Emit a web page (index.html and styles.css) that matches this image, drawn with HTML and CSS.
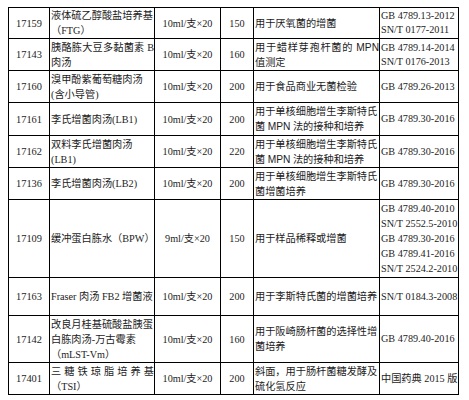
FILE: index.html
```html
<!DOCTYPE html>
<html lang="zh-CN">
<head>
<meta charset="utf-8">
<title>培养基规格表</title>
<link rel="stylesheet" href="styles.css">
</head>
<body>
<table class="spec">
  <colgroup>
    <col class="c-code"><col class="c-name"><col class="c-pack"><col class="c-qty"><col class="c-use"><col class="c-std">
  </colgroup>
  <tbody>
    <tr class="h31">
      <td class="code">17159</td>
      <td class="name">液体硫乙醇酸盐培养基<br>（FTG）</td>
      <td class="pack">10ml/支×20</td>
      <td class="qty">150</td>
      <td class="use">用于厌氧菌的增菌</td>
      <td class="std">GB 4789.13-2012<br>SN/T 0177-2011</td>
    </tr>
    <tr class="h32">
      <td class="code">17143</td>
      <td class="name"><span class="jl">胰酪胨大豆多黏菌素 B</span>肉汤</td>
      <td class="pack">10ml/支×20</td>
      <td class="qty">160</td>
      <td class="use"><span class="jl">用于蜡样芽孢杆菌的 <span class="sans">MPN</span></span>值测定</td>
      <td class="std">GB 4789.14-2014<br>SN/T 0176-2013</td>
    </tr>
    <tr class="h32">
      <td class="code">17160</td>
      <td class="name">溴甲酚紫葡萄糖肉汤<br>(含小导管)</td>
      <td class="pack">10ml/支×20</td>
      <td class="qty">200</td>
      <td class="use">用于食品商业无菌检验</td>
      <td class="std">GB 4789.26-2013</td>
    </tr>
    <tr class="h33">
      <td class="code">17161</td>
      <td class="name">李氏增菌肉汤(LB1)</td>
      <td class="pack">10ml/支×20</td>
      <td class="qty">200</td>
      <td class="use">用于单核细胞增生李斯特氏<br>菌 <span class="sans">MPN</span> 法的接种和培养</td>
      <td class="std">GB 4789.30-2016</td>
    </tr>
    <tr class="h32">
      <td class="code">17162</td>
      <td class="name">双料李氏增菌肉汤<br>(LB1)</td>
      <td class="pack">10ml/支×20</td>
      <td class="qty">220</td>
      <td class="use">用于单核细胞增生李斯特氏<br>菌 <span class="sans">MPN</span> 法的接种和培养</td>
      <td class="std">GB 4789.30-2016</td>
    </tr>
    <tr class="h32">
      <td class="code">17136</td>
      <td class="name">李氏增菌肉汤(LB2)</td>
      <td class="pack">10ml/支×20</td>
      <td class="qty">200</td>
      <td class="use">用于单核细胞增生李斯特氏<br>菌增菌培养</td>
      <td class="std">GB 4789.30-2016</td>
    </tr>
    <tr class="h78">
      <td class="code">17109</td>
      <td class="name">缓冲蛋白胨水（BPW）</td>
      <td class="pack">9ml/支×20</td>
      <td class="qty">150</td>
      <td class="use">用于样品稀释或增菌</td>
      <td class="std tall">GB 4789.40-2010<br>SN/T 2552.5-2010<br>GB 4789.30-2016<br>GB 4789.41-2016<br>SN/T 2524.2-2010</td>
    </tr>
    <tr class="h38">
      <td class="code">17163</td>
      <td class="name">Fraser 肉汤 FB2 增菌液</td>
      <td class="pack">10ml/支×20</td>
      <td class="qty">200</td>
      <td class="use">用于李斯特氏菌的增菌培养</td>
      <td class="std">SN/T 0184.3-2008</td>
    </tr>
    <tr class="h47">
      <td class="code">17142</td>
      <td class="name">改良月桂基硫酸盐胰蛋<br>白胨肉汤-万古霉素<br>（mLST-Vm）</td>
      <td class="pack">10ml/支×20</td>
      <td class="qty">160</td>
      <td class="use">用于阪崎肠杆菌的选择性增<br>菌培养</td>
      <td class="std">GB 4789.40-2016</td>
    </tr>
    <tr class="h32">
      <td class="code">17401</td>
      <td class="name"><span class="jl">三糖铁琼脂培养基</span>（TSI）</td>
      <td class="pack">10ml/支×20</td>
      <td class="qty">200</td>
      <td class="use">斜面，用于肠杆菌糖发酵及<br>硫化氢反应</td>
      <td class="std">中国药典 2015 版</td>
    </tr>
  </tbody>
</table>
</body>
</html>
```

FILE: styles.css
```css
html, body {
  background: #ffffff;
}
body {
  margin: 7px 0 0 8px;
  font-family: "Liberation Serif", "Noto Sans CJK SC", serif;
  font-size: 10.2px;
  color: #1c1c1c;
}
.spec {
  border-collapse: collapse;
  table-layout: fixed;
  width: 450px;
}
.c-code { width: 41px; }
.c-name { width: 105px; }
.c-pack { width: 66px; }
.c-qty { width: 33px; }
.c-use { width: 126px; }
.c-std { width: 79px; }

.spec td {
  border: 1px solid #000;
  padding: 0 0 0 1px;
  vertical-align: middle;
  line-height: 15px;
  white-space: nowrap;
  overflow: hidden;
}
.h31 { height: 31px; }
.h32 { height: 32px; }
.h33 { height: 33px; }
.h38 { height: 38px; }
.h47 { height: 47px; }
.h78 { height: 78px; }

.spec .code,
.spec .pack,
.spec .qty {
  text-align: center;
  padding: 0;
}
.spec .code { font-size: 10.4px; }
.spec .name,
.spec .use {
  text-align: left;
}
.spec .std {
  text-align: left;
  line-height: 14px;
}
.spec .std.tall {
  line-height: 15px;
}
.jl {
  display: block;
  white-space: normal;
  text-align: justify;
  text-align-last: justify;
}
.sans {
  font-family: "Liberation Sans", sans-serif;
}
```
